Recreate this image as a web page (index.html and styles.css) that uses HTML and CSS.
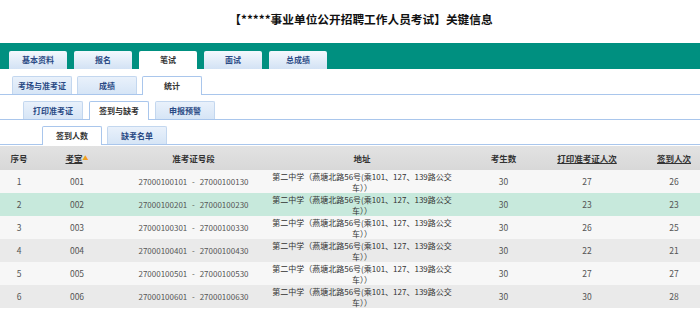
FILE: index.html
```html
<!DOCTYPE html>
<html lang="zh-CN">
<head>
<meta charset="utf-8">
<title>关键信息</title>
<link rel="stylesheet" href="styles.css">
</head>
<body>
<h1 class="title">【*****事业单位公开招聘工作人员考试】关键信息</h1>
<nav class="main-nav">
  <a class="tab">基本资料</a>
  <a class="tab">报名</a>
  <a class="tab active">笔试</a>
  <a class="tab">面试</a>
  <a class="tab">总成绩</a>
</nav>
<nav class="subnav l2">
  <a class="stab">考场与准考证</a>
  <a class="stab">成绩</a>
  <a class="stab active">统计</a>
</nav>
<nav class="subnav l3">
  <a class="stab">打印准考证</a>
  <a class="stab active">签到与缺考</a>
  <a class="stab">申报预警</a>
</nav>
<nav class="subnav l4">
  <a class="stab active">签到人数</a>
  <a class="stab">缺考名单</a>
</nav>
<table class="grid">
  <colgroup>
    <col class="c1"><col class="c2"><col class="c3"><col class="c4"><col class="c5"><col class="c6"><col class="c7">
  </colgroup>
  <thead>
    <tr>
      <th>序号</th>
      <th><span class="link">考室</span><span class="sort">▲</span></th>
      <th>准考证号段</th>
      <th>地址</th>
      <th>考生数</th>
      <th class="print"><span class="link">打印准考证人次</span></th>
      <th><span class="link">签到人次</span></th>
    </tr>
  </thead>
  <tbody>
    <tr><td>1</td><td>001</td><td class="range">27000100101 - 27000100130</td><td class="addr"><div>第二中学（燕塘北路56号(乘101、127、139路公交车））</div></td><td>30</td><td class="print">27</td><td>26</td></tr>
    <tr class="hl"><td>2</td><td>002</td><td class="range">27000100201 - 27000100230</td><td class="addr"><div>第二中学（燕塘北路56号(乘101、127、139路公交车））</div></td><td>30</td><td class="print">23</td><td>23</td></tr>
    <tr><td>3</td><td>003</td><td class="range">27000100301 - 27000100330</td><td class="addr"><div>第二中学（燕塘北路56号(乘101、127、139路公交车））</div></td><td>30</td><td class="print">26</td><td>25</td></tr>
    <tr><td>4</td><td>004</td><td class="range">27000100401 - 27000100430</td><td class="addr"><div>第二中学（燕塘北路56号(乘101、127、139路公交车））</div></td><td>30</td><td class="print">22</td><td>21</td></tr>
    <tr><td>5</td><td>005</td><td class="range">27000100501 - 27000100530</td><td class="addr"><div>第二中学（燕塘北路56号(乘101、127、139路公交车））</div></td><td>30</td><td class="print">27</td><td>27</td></tr>
    <tr><td>6</td><td>006</td><td class="range">27000100601 - 27000100630</td><td class="addr"><div>第二中学（燕塘北路56号(乘101、127、139路公交车））</div></td><td>30</td><td class="print">30</td><td>28</td></tr>
  </tbody>
</table>
</body>
</html>
```

FILE: styles.css
```css
body {
  margin: 0;
  background: #fff;
  color: #333;
  font-family: "Noto Sans CJK SC", sans-serif;
}

.title {
  margin: 0;
  height: 43px;
  padding-left: 22px;
  line-height: 38px;
  text-align: center;
  font-size: 11.7px;
  font-weight: bold;
  color: #111;
}

.main-nav {
  display: flex;
  align-items: flex-end;
  gap: 7px;
  height: 26px;
  padding-left: 9px;
  box-sizing: border-box;
  background: #009080;
}

.tab {
  width: 58px;
  height: 18px;
  line-height: 18px;
  text-align: center;
  font-size: 8px;
  font-weight: bold;
  color: #2a4a85;
  background: linear-gradient(#f3f8fd, #d3e2f4);
  border-radius: 2px 2px 0 0;
}

.tab.active {
  background: #fff;
  color: #333;
}

.subnav {
  display: flex;
  align-items: flex-end;
  gap: 5px;
  box-sizing: border-box;
  border-bottom: 1px solid #a9c6ec;
}

.l2 { height: 26px; padding-left: 12px; }
.l3 { height: 25px; padding-left: 23px; gap: 6px; }
.l4 { height: 25px; padding-left: 42px; }

.stab {
  box-sizing: border-box;
  width: 60px;
  height: 18px;
  line-height: 17px;
  text-align: center;
  font-size: 8px;
  font-weight: bold;
  color: #2a4a85;
  background: linear-gradient(#e9f1fb, #d6e5f6);
  border: 1px solid #c3d7ef;
  border-bottom: none;
  border-radius: 2px 2px 0 0;
}

.stab.active {
  height: 19px;
  margin-bottom: -1px;
  background: #fff;
  border-color: #a9c6ec;
  color: #333;
}

.grid {
  width: 700px;
  margin-top: 1px;
  border-collapse: collapse;
  table-layout: fixed;
  font-size: 8.5px;
  color: #555;
}

.c1 { width: 38px; }
.c2 { width: 78px; }
.c3 { width: 155px; }
.c4 { width: 182px; }
.c5 { width: 101px; }
.c6 { width: 94px; }
.c7 { width: 52px; }

.grid th {
  height: 24px;
  padding: 0;
  background: linear-gradient(#e2e2e2, #d8d8d8);
  font-size: 8.5px;
  font-weight: bold;
  color: #333;
}

.grid td {
  height: 23px;
  padding: 0;
  text-align: center;
  line-height: 11px;
  background: #f7f7f7;
}

.grid tbody tr:nth-child(even) td { background: #eaeaea; }
.grid tbody tr.hl td { background: #c7e9dc; }

.grid .print { padding-right: 28px; }

.grid .range {
  font-size: 8px;
  word-spacing: 3px;
}

.addr div {
  width: 180px;
  margin: 0 auto;
  font-size: 8px;
  color: #333;
}

.link { text-decoration: underline; }
.sort { color: #f0a020; font-size: 6px; vertical-align: 2px; }
```
